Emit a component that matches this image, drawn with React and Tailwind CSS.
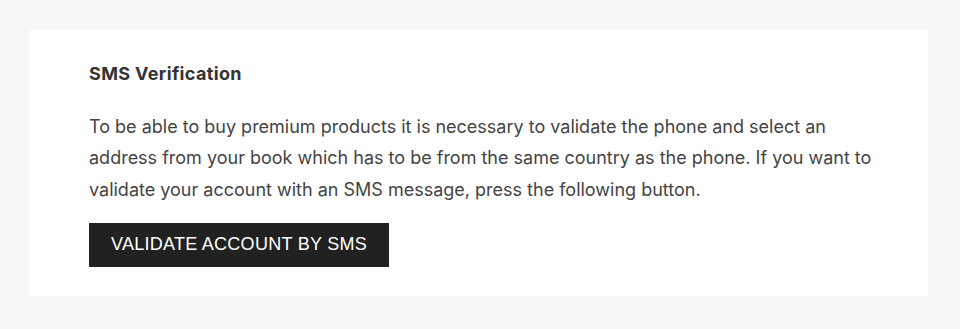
import React from 'react';

export default function App() {
  return (
    <div className="min-h-[329px] bg-[#f7f7f7] pl-[30px] pr-[32px] pt-[30px] pb-[32px]">
      <section className="bg-white pl-[59px] pr-[40px] pt-[32px] pb-[29.5px]">
        <h2 className="font-['Inter',sans-serif] text-[18px] font-bold leading-[24px] tracking-[0.02em] text-[#333]">
          SMS Verification
        </h2>
        <p className="mt-[24.6px] max-w-[790px] font-['Inter',sans-serif] text-[18px] leading-[31.7px] text-[#444]">
          To be able to buy premium products it is necessary to validate the phone and select an
          address from your book which has to be from the same country as the phone. If you want to
          validate your account with an SMS message, press the following button.
        </p>
        <button className="mt-[17px] h-[44px] bg-[#212121] px-[22px] font-['Liberation_Sans',Arial,sans-serif] text-[18px] uppercase tracking-[0.015em] text-white">
          Validate account by SMS
        </button>
      </section>
    </div>
  );
}
